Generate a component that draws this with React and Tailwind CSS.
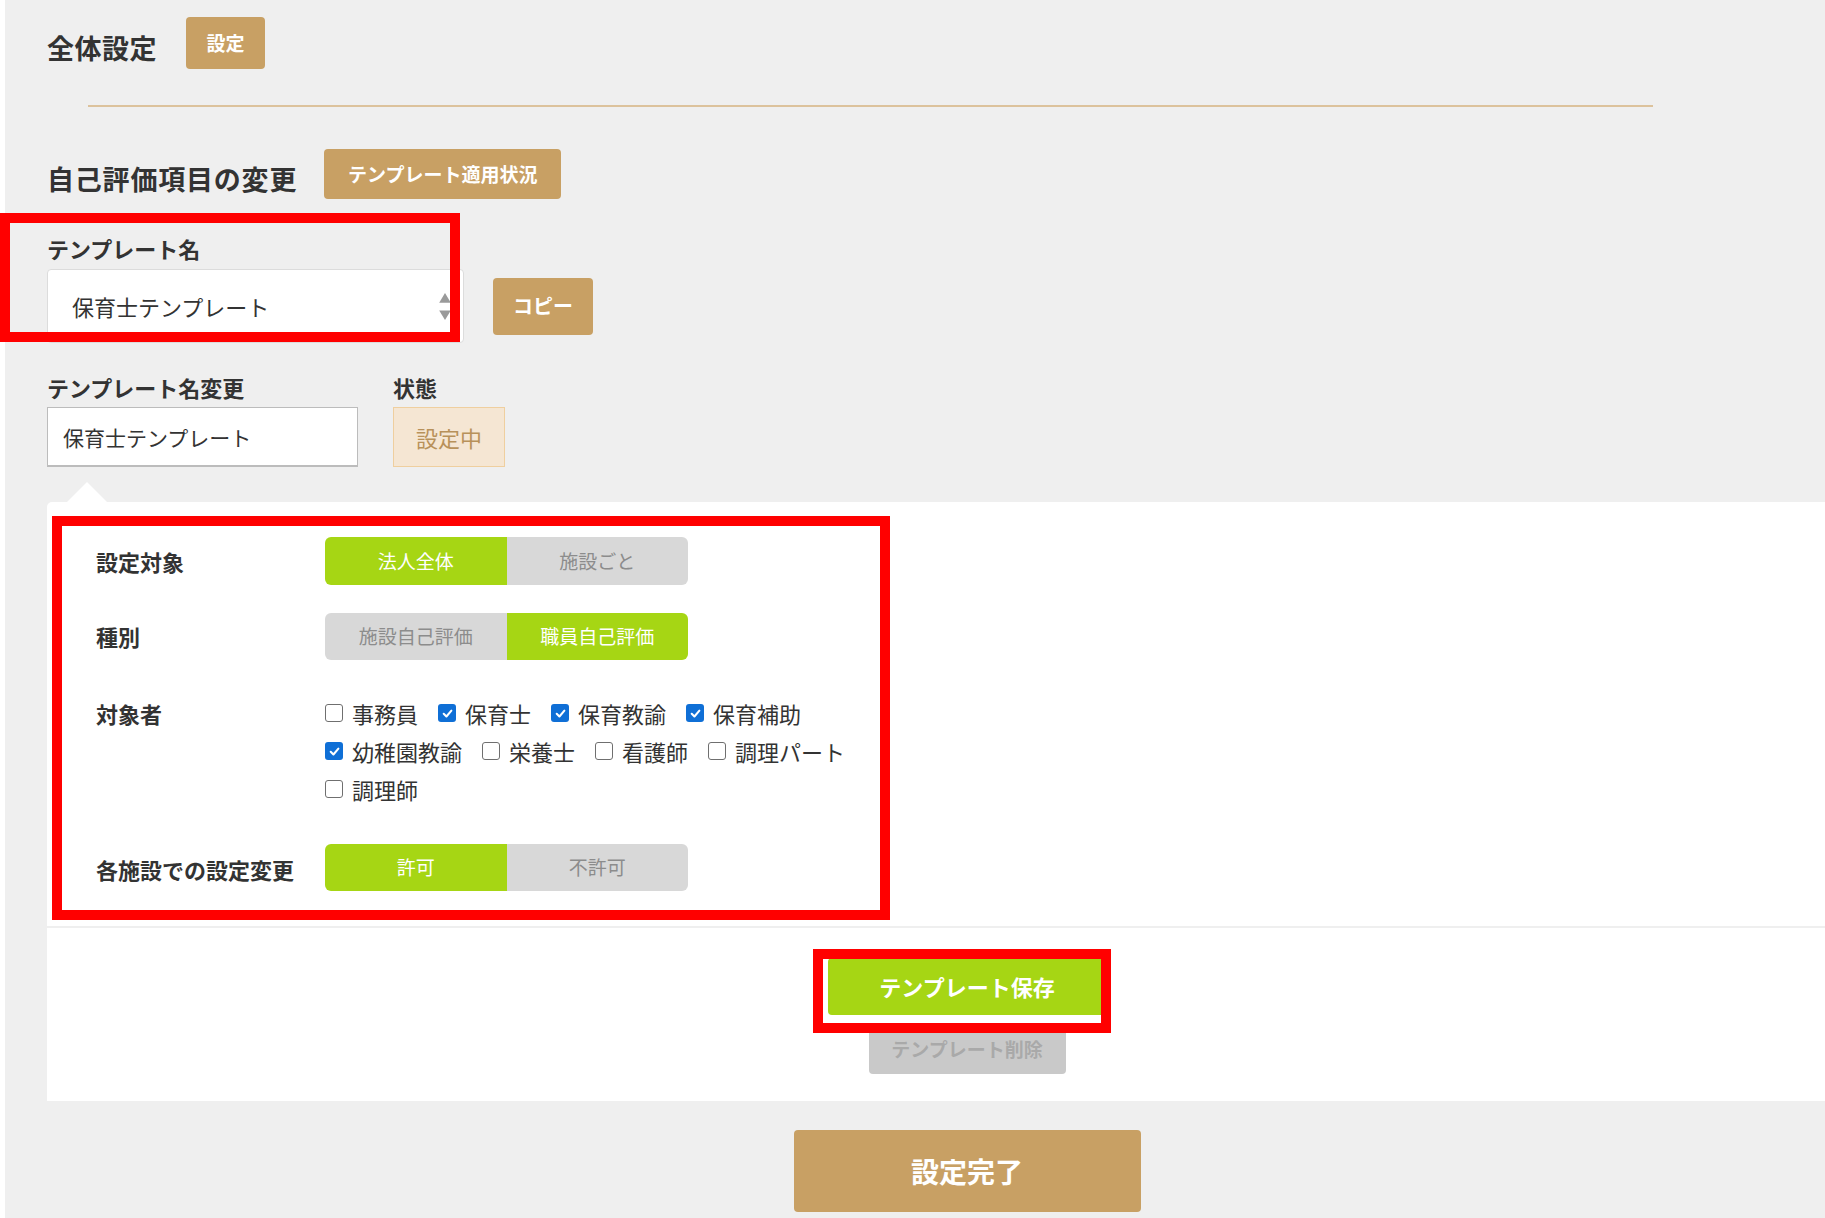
import { useState } from "react";

const Toggle = ({ options, value, onChange, tall }) => {
  return (
    <div
      className={`flex w-[363px] overflow-hidden rounded-[6px] ${
        tall ? "h-[48px]" : "h-[47px]"
      }`}
    >
      {options.map((opt) => (
        <button
          key={opt}
          type="button"
          onClick={() => onChange(opt)}
          className={`flex-1 text-[19px] ${
            value === opt
              ? "bg-[#a6d614] text-white"
              : "bg-[#d8d8d8] text-[#8c8c8c]"
          }`}
        >
          {opt}
        </button>
      ))}
    </div>
  );
};

const Check = ({ label, checked, onToggle }) => {
  return (
    <label
      className="mr-[20px] flex h-[38px] cursor-pointer items-center"
      onClick={onToggle}
    >
      {checked ? (
        <span className="flex h-[18px] w-[18px] items-center justify-center rounded-[3px] bg-[#0f6fd6]">
          <svg viewBox="0 0 12 12" className="h-[13px] w-[13px]">
            <path
              d="M2.5 6.3 L5 8.8 L9.6 3.4"
              fill="none"
              stroke="white"
              strokeWidth="1.9"
              strokeLinecap="round"
              strokeLinejoin="round"
            />
          </svg>
        </span>
      ) : (
        <span className="h-[18px] w-[18px] rounded-[3px] border-[1.5px] border-[#6f6f6f] bg-white" />
      )}
      <span className="ml-[9px] text-[22px] leading-none text-[#333]">
        {label}
      </span>
    </label>
  );
};

const staffTypes = [
  "事務員",
  "保育士",
  "保育教諭",
  "保育補助",
  "幼稚園教諭",
  "栄養士",
  "看護師",
  "調理パート",
  "調理師",
];

const App = () => {
  const [scope, setScope] = useState("法人全体");
  const [kind, setKind] = useState("職員自己評価");
  const [allow, setAllow] = useState("許可");
  const [targets, setTargets] = useState({
    保育士: true,
    保育教諭: true,
    保育補助: true,
    幼稚園教諭: true,
  });
  const [name, setName] = useState("保育士テンプレート");

  const toggleTarget = (t) => {
    setTargets({ ...targets, [t]: !targets[t] });
  };

  return (
    <div className="relative flex h-[1218px] w-full overflow-hidden bg-[#efefef] font-['Noto_Sans_CJK_JP','Noto_Sans',sans-serif] text-[#333]">
      <div className="w-[5px] shrink-0 bg-white" />
      <div className="flex-1 pl-[42px] pt-[17px]">
        {/* 全体設定 */}
        <div className="flex items-center">
          <h1 className="mt-[8px] text-[27px] font-bold leading-none tracking-[0.5px]">
            全体設定
          </h1>
          <button className="ml-[29px] h-[52px] w-[79px] rounded-[4px] bg-[#c8a064] text-[19px] font-bold text-white">
            設定
          </button>
        </div>

        <div className="ml-[41px] mt-[36px] h-[2px] w-[1565px] bg-[#dcc29c]" />

        {/* 自己評価項目の変更 */}
        <div className="mt-[42px] flex items-center">
          <h2 className="mt-[8px] text-[27px] font-bold leading-none tracking-[0.8px]">
            自己評価項目の変更
          </h2>
          <button className="ml-[27px] h-[50px] w-[237px] rounded-[4px] bg-[#c8a064] text-[19px] font-bold text-white">
            テンプレート適用状況
          </button>
        </div>

        <div className="mt-[35px] text-[22px] font-bold leading-[28px]">
          テンプレート名
        </div>
        <div className="mt-[7px] flex items-center">
          <div className="relative flex h-[74px] w-[417px] items-center rounded-[4px] border border-[#dcdcdc] bg-white pl-[24px]">
            <span className="text-[22px] text-[#333]">保育士テンプレート</span>
            <svg
              viewBox="0 0 12 30"
              className="absolute right-[12px] top-[23px] h-[29px] w-[12px]"
            >
              <path d="M6 0 L12 10 L0 10 Z" fill="#9a9a9a" />
              <path d="M0 18 L12 18 L6 28 Z" fill="#9a9a9a" />
            </svg>
          </div>
          <button className="ml-[29px] h-[57px] w-[100px] rounded-[4px] bg-[#c8a064] text-[20px] font-bold text-white">
            コピー
          </button>
        </div>

        <div className="mt-[30px] flex">
          <div className="w-[311px]">
            <div className="text-[22px] font-bold leading-[28px]">
              テンプレート名変更
            </div>
            <input
              value={name}
              onChange={(e) => setName(e.target.value)}
              className="mt-[6px] h-[60px] w-[311px] border-[1.5px] border-b-2 border-[#bcbcbc] bg-white pl-[15px] text-[21px] text-[#333] outline-none"
            />
          </div>
          <div className="ml-[35px]">
            <div className="text-[22px] font-bold leading-[28px]">状態</div>
            <div className="mt-[6px] flex h-[60px] w-[112px] items-center justify-center border-[1.5px] border-[#efcf9f] bg-[#f5e6d3] text-[22px] text-[#b8915a]">
              設定中
            </div>
          </div>
        </div>

        {/* panel */}
        <div className="relative mt-[35px] w-[1840px] rounded-tl-[5px] bg-white">
          <div className="absolute -top-[20px] left-[20px] h-0 w-0 border-x-[20px] border-b-[20px] border-x-transparent border-b-white" />

          <div className="border-b-2 border-[#efefef] pb-[35px] pl-[49px] pt-[35px]">
            <div className="flex items-center">
              <div className="w-[229px] text-[22px] font-bold">設定対象</div>
              <Toggle
                options={["法人全体", "施設ごと"]}
                value={scope}
                onChange={setScope}
                tall
              />
            </div>
            <div className="mt-[28px] flex items-center">
              <div className="w-[229px] text-[22px] font-bold">種別</div>
              <Toggle
                options={["施設自己評価", "職員自己評価"]}
                value={kind}
                onChange={setKind}
              />
            </div>
            <div className="mt-[34px] flex items-start">
              <div className="flex h-[38px] w-[229px] items-center text-[22px] font-bold">
                対象者
              </div>
              <div className="flex w-[580px] flex-wrap">
                {staffTypes.map((t) => (
                  <Check
                    key={t}
                    label={t}
                    checked={!!targets[t]}
                    onToggle={(e) => {
                      e.preventDefault();
                      toggleTarget(t);
                    }}
                  />
                ))}
              </div>
            </div>
            <div className="mt-[36px] flex items-center">
              <div className="w-[229px] pt-[3px] text-[22px] font-bold">
                各施設での設定変更
              </div>
              <Toggle
                options={["許可", "不許可"]}
                value={allow}
                onChange={setAllow}
              />
            </div>
          </div>

          <div className="flex flex-col items-center pb-[27px] pt-[30px]">
            <button className="h-[57px] w-[278px] rounded-[4px] bg-[#a6d614] text-[22px] font-bold text-white">
              テンプレート保存
            </button>
            <button className="mt-[10px] h-[49px] w-[197px] rounded-[4px] bg-[#c9c9c9] text-[19px] font-bold text-[#a9a9a9]">
              テンプレート削除
            </button>
          </div>
        </div>

        <div className="flex w-[1840px] justify-center pt-[29px]">
          <button className="h-[82px] w-[347px] rounded-[4px] bg-[#c8a064] text-[28px] font-bold text-white">
            設定完了
          </button>
        </div>
      </div>

      {/* annotation boxes */}
      <div className="pointer-events-none absolute left-0 top-[213px] h-[129px] w-[460px] border-[10px] border-[#ff0000]" />
      <div className="pointer-events-none absolute left-[52px] top-[516px] h-[404px] w-[838px] border-[10px] border-[#ff0000]" />
      <div className="pointer-events-none absolute left-[813px] top-[949px] h-[84px] w-[298px] border-[10px] border-[#ff0000]" />
    </div>
  );
};

export default App;
